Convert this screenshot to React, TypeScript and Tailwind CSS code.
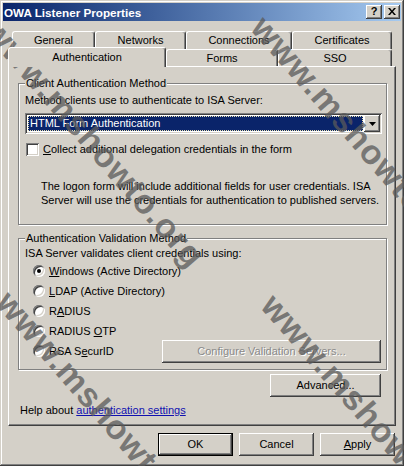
import React from "react";

const raised =
  "shadow-[inset_-1px_-1px_#404040,inset_1px_1px_#ffffff,inset_-2px_-2px_#808080]";
const sunken =
  "shadow-[inset_1px_1px_#808080,inset_-1px_-1px_#ffffff,inset_2px_2px_#404040,inset_-2px_-2px_#d4d0c8]";
const tabBase =
  "flex items-center justify-center bg-[#d4d0c8] border-l border-t border-r border-l-white border-t-white border-r-[#404040] rounded-tl-[3px] rounded-tr-[3px] shadow-[inset_-1px_0_#808080]";
const etched = "relative border border-[#808080] shadow-[inset_1px_1px_#ffffff,1px_1px_#ffffff]";

function Radio({ checked }: { checked?: boolean }) {
  return (
    <div className={`relative w-[12px] h-[12px] rounded-full bg-white ${sunken} flex items-center justify-center`}>
      {checked && <div className="w-[4px] h-[4px] rounded-full bg-black" />}
    </div>
  );
}

function RadioRow({ children, checked, extra }: { children: React.ReactNode; checked?: boolean; extra?: React.ReactNode }) {
  return (
    <div className="flex items-center h-[20px] pl-[14px]">
      <Radio checked={checked} />
      <span className="ml-[4px]">{children}</span>
      {extra}
    </div>
  );
}

function Watermark({ cls }: { cls: string }) {
  return (
    <span
      className={`absolute pointer-events-none select-none whitespace-nowrap font-bold text-[34px] leading-none tracking-[1px] text-[#5a5a5a]/75 -translate-x-1/2 -translate-y-1/2 rotate-[49deg] ${cls}`}
    >
      www.mshowto.org
    </span>
  );
}

export default function App() {
  return (
    <div className="relative w-[404px] h-[466px] overflow-hidden bg-[#d4d0c8] font-['Liberation_Sans',Arial,sans-serif] text-[11px] leading-[13px] text-black">
      <div className="w-full h-full p-[3px] shadow-[inset_-1px_-1px_#404040,inset_1px_1px_#d4d0c8,inset_-2px_-2px_#808080,inset_2px_2px_#ffffff] flex flex-col">
        {/* Title bar */}
        <div className="h-[18px] flex items-center bg-gradient-to-r from-[#0a246a] to-[#a6caf0] pl-[1px]">
          <span className="font-bold text-white text-[11.7px] tracking-[0px]">OWA Listener Properties</span>
          <div className="ml-auto mr-[1px] flex items-center gap-[2px]">
            <div className={`w-[16px] h-[14px] bg-[#d4d0c8] ${raised} flex items-center justify-center font-bold text-[11px] leading-none pb-[1px]`}>
              ?
            </div>
            <div className={`w-[16px] h-[14px] bg-[#d4d0c8] ${raised} flex items-center justify-center pb-[1px]`}>
              <svg width="8" height="7" viewBox="0 0 8 7">
                <path d="M0 0h2l2 2.5L6 0h2L5 3.5 8 7H6L4 4.5 2 7H0l3-3.5z" fill="#000" />
              </svg>
            </div>
          </div>
        </div>

        {/* Tabs row 1 */}
        <div className="mt-[10px] ml-[9px] flex h-[18px]">
          <div className={`${tabBase} w-[83px]`}>General</div>
          <div className={`${tabBase} w-[91px]`}>Networks</div>
          <div className={`${tabBase} w-[106px]`}>Connections</div>
          <div className={`${tabBase} w-[100px]`}>Certificates</div>
        </div>
        {/* Tabs row 2 */}
        <div className="ml-[5px] flex items-end h-[17px]">
          <div className={`${tabBase} relative z-10 -mb-[1px] h-[20px] w-[158px]`}>Authentication</div>
          <div className={`${tabBase} h-[17px] w-[112px]`}>Forms</div>
          <div className={`${tabBase} h-[17px] w-[114px]`}>SSO</div>
        </div>

        {/* Panel */}
        <div className="ml-[5px] w-[388px] h-[360px] border-l border-t border-r border-b border-l-white border-t-white border-r-[#404040] border-b-[#404040] shadow-[inset_-1px_-1px_#808080] flex flex-col">
          {/* Group 1 */}
          <div className={`${etched} mt-[16px] ml-[9px] w-[369px] h-[142px] pl-[6px] pt-[10px]`}>
            <span className="absolute left-[6px] -top-[7px] px-[1px] bg-[#d4d0c8]">Client Authentication Method</span>
            <div>Method clients use to authenticate to ISA Server:</div>
            <div className={`mt-[6px] flex h-[21px] w-[357px] bg-white p-[2px] ${sunken}`}>
              <div className="flex-1 p-[1px]">
                <div className="h-full bg-[#0a246a] text-white border border-dotted border-[#e8e0b0] pl-[1px] flex items-center">
                  HTML Form Authentication
                </div>
              </div>
              <div className={`w-[16px] h-[17px] bg-[#d4d0c8] ${raised} flex items-center justify-center`}>
                <svg width="7" height="4" viewBox="0 0 7 4">
                  <path d="M0 0h7L3.5 4z" fill="#000" />
                </svg>
              </div>
            </div>
            <div className="mt-[9px] flex items-center h-[13px]">
              <div className={`ml-[1px] w-[13px] h-[13px] bg-white ${sunken}`} />
              <span className="ml-[4px]">
                <u>C</u>ollect additional delegation credentials in the form
              </span>
            </div>
            <div className="mt-[23px] ml-[16px] leading-[14px]">
              The logon form will include additional fields for user credentials. ISA
              <br />
              Server will use the credentials for authentication to published servers.
            </div>
          </div>

          {/* Group 2 */}
          <div className={`${etched} mt-[13px] ml-[9px] w-[369px] h-[132px] pt-[8px] pr-[5px]`}>
            <span className="absolute left-[6px] -top-[7px] px-[1px] bg-[#d4d0c8]">Authentication Validation Method</span>
            <div className="pl-[6px]">ISA Server validates client credentials using:</div>
            <div className="mt-[1px]">
              <RadioRow checked>
                <u>W</u>indows (Active Directory)
              </RadioRow>
              <RadioRow>
                <u>L</u>DAP (Active Directory)
              </RadioRow>
              <RadioRow>
                R<u>A</u>DIUS
              </RadioRow>
              <RadioRow>
                RADIUS <u>O</u>TP
              </RadioRow>
              <RadioRow
                extra={
                  <div className={`ml-auto w-[219px] h-[23px] shrink-0 bg-[#d4d0c8] ${raised} flex items-center justify-center text-[#8a8a8a] [text-shadow:1px_1px_0_#ffffff]`}>
                    Configure Validation Servers...
                  </div>
                }
              >
                RSA S<u>e</u>curID
              </RadioRow>
            </div>
          </div>

          <div className={`mt-[4px] self-end mr-[14px] w-[111px] h-[23px] bg-[#d4d0c8] ${raised} flex items-center justify-center`}>
            Advanced...
          </div>

          <div className="mt-[7px] ml-[11px]">
            Help about <span className="text-[#1010b0] underline">authentication settings</span>
          </div>
        </div>

        {/* Bottom buttons */}
        <div className="mt-[7px] flex justify-end gap-[6px] mr-[6px]">
          <div className="w-[75px] h-[23px] bg-[#d4d0c8] shadow-[inset_0_0_0_1px_#000000,inset_-2px_-2px_#404040,inset_2px_2px_#ffffff,inset_-3px_-3px_#808080] flex items-center justify-center">
            OK
          </div>
          <div className={`w-[75px] h-[23px] bg-[#d4d0c8] ${raised} flex items-center justify-center`}>Cancel</div>
          <div className={`w-[75px] h-[23px] bg-[#d4d0c8] ${raised} flex items-center justify-center`}>
            <u>A</u>pply
          </div>
        </div>
      </div>

      <Watermark cls="left-[95px] top-[143px]" />
      <Watermark cls="left-[362px] top-[140px]" />
      <Watermark cls="left-[107px] top-[415px]" />
      <Watermark cls="left-[372px] top-[418px]" />
    </div>
  );
}
